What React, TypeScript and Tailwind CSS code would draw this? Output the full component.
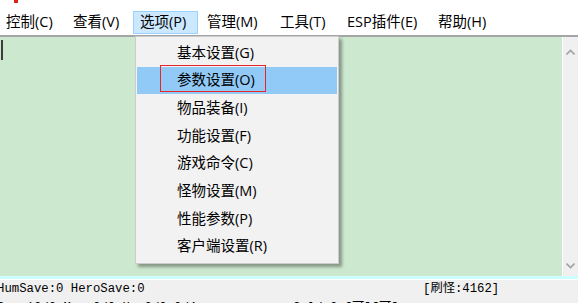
import React from 'react';

const menus = [
  { label: '控制(C)', w: 'w-[67px]' },
  { label: '查看(V)', w: 'w-[67px]' },
  { label: '选项(P)', w: 'w-[67px]', active: true },
  { label: '管理(M)', w: 'w-[73px]' },
  { label: '工具(T)', w: 'w-[67px]' },
  { label: 'ESP插件(E)', w: 'w-[91px]' },
  { label: '帮助(H)', w: 'w-[70px]' },
];

const options = [
  '基本设置(G)',
  '参数设置(O)',
  '物品装备(I)',
  '功能设置(F)',
  '游戏命令(C)',
  '怪物设置(M)',
  '性能参数(P)',
  '客户端设置(R)',
];

function Chevron({ up }: { up?: boolean }) {
  return (
    <svg width="9" height="6" viewBox="0 0 9 6" className="block">
      <polyline
        points={up ? '0.5,5.5 4.5,1.5 8.5,5.5' : '0.5,0.5 4.5,4.5 8.5,0.5'}
        fill="none"
        stroke="#a3a3a3"
        strokeWidth="1.6"
      />
    </svg>
  );
}

export default function App() {
  return (
    <div className="relative flex h-[303px] w-[578px] flex-col overflow-hidden bg-white font-['Open_Sans','Noto_Sans_CJK_SC',sans-serif] text-[14.5px] text-black">
      {/* title strip */}
      <div className="relative h-[10px] shrink-0">
        <div className="absolute left-[14px] top-0 h-[3px] w-[4px] bg-[#e0201c]" />
      </div>

      {/* menu bar */}
      <div className="ml-[-1px] flex h-[25px] shrink-0 items-start">
        {menus.map((m) => (
          <div
            key={m.label}
            className={
              m.active
                ? 'mt-[1px] mr-[2px] flex h-[23px] w-[65px] items-center border border-[#99d1ff] bg-[#cce8ff] pl-[6px] leading-none'
                : `mt-[1px] flex h-[23px] ${m.w} items-center border border-transparent pl-[6px] leading-none`
            }
          >
            {m.label}
          </div>
        ))}
      </div>

      {/* editor area */}
      <div className="flex h-[241px] shrink-0 flex-col">
        <div className="h-[2px] bg-[#a5a5a5]" />
        <div className="flex flex-1">
          <div className="flex-1 bg-[#cce8cf]">
            <div className="ml-[1px] mt-[3px] h-[20px] w-[2px] bg-[#3c3c3c]" />
          </div>
          <div className="flex w-[16px] flex-col items-center justify-between border-l border-white bg-[#f0f0f0] pb-[7px] pt-[12px]">
            <Chevron up />
            <Chevron />
          </div>
        </div>
      </div>
      <div className="h-[3px] shrink-0 bg-[#ccffff]" />
      <div className="h-[1px] shrink-0 bg-white" />

      {/* status */}
      <div className="flex-1 bg-[#f0f0f0] font-['Liberation_Mono','Noto_Sans_CJK_SC',monospace] text-[12.3px] leading-none">
        <div className="ml-[-3px] flex h-[15px] items-end">
          <span className="w-[426px]">HumSave:0 HeroSave:0</span>
          <span>[刷怪:4162]</span>
        </div>
        <div className="ml-[-3px] mt-[7px] flex">
          <span className="w-[296px]">Pos:10/0 Map:0/0 Hp:0/0:0/4</span>
          <span>Gold:0 [可][可]</span>
        </div>
      </div>

      {/* dropdown menu */}
      <div className="absolute left-[135px] top-[36px] w-[204px] border border-[#cccccc] bg-[#f2f2f2] py-[2px] shadow-[3px_3px_3px_rgba(0,0,0,0.35)]">
        {options.map((o, i) => (
          <div
            key={o}
            className={`mx-[1px] flex h-[27.7px] items-center pl-[40px] leading-none ${i === 1 ? 'bg-[#91c9f7]' : ''}`}
          >
            {o}
          </div>
        ))}
        <div className="absolute left-[24px] top-[28px] h-[27px] w-[106px] border border-[#e8262a]" />
      </div>
    </div>
  );
}
